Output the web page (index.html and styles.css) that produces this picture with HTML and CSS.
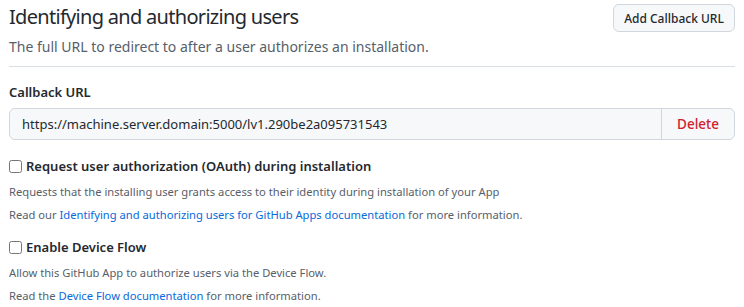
FILE: index.html
```html
<!DOCTYPE html>
<html>
  <head>
    <title>Identifying and authorizing users</title>
    <meta http-equiv="content-type" content="text/html;charset=utf-8">
    <link rel="stylesheet" href="styles.css">
  </head>
  <body>
    <div class="section">
      <div class="subhead">
        <div class="subhead-text">
          <h2>Identifying and authorizing users</h2>
          <p class="subhead-desc">The full URL to redirect to after a user authorizes an installation.</p>
        </div>
        <button class="btn">Add Callback URL</button>
      </div>

      <div class="form-group">
        <label class="label">Callback URL</label>
        <div class="input-group">
          <input class="input" type="text" value="https://machine.server.domain:5000/lv1.290be2a095731543">
          <button class="btn-delete">Delete</button>
        </div>
      </div>

      <div class="check">
        <label class="check-label"><input type="checkbox"> Request user authorization (OAuth) during installation</label>
        <p class="note">Requests that the installing user grants access to their identity during installation of your App</p>
        <p class="note">Read our <a href="#">Identifying and authorizing users for GitHub Apps documentation</a> for more information.</p>
      </div>

      <div class="check check-device">
        <label class="check-label"><input type="checkbox"> Enable Device Flow</label>
        <p class="note">Allow this GitHub App to authorize users via the Device Flow.</p>
        <p class="note">Read the <a href="#">Device Flow documentation</a> for more information.</p>
      </div>
    </div>
  </body>
</html>
```

FILE: styles.css
```css
body {
  font: 14px/1.5 "Noto Sans", sans-serif;
  margin: 0;
  color: #24292f;
  background: #fff;
}

.section {
  padding: 2px 9px 0 9px;
}

.subhead {
  display: flex;
  justify-content: space-between;
  align-items: flex-start;
  border-bottom: 1px solid #d8dee4;
  padding-bottom: 9px;
}

h2 {
  margin: 0;
  font-size: 20px;
  font-weight: 400;
  line-height: 30px;
  letter-spacing: -0.7px;
}

.subhead-desc {
  margin: 4px 0 0;
  line-height: 21px;
  color: #57606a;
}

.btn {
  font: 500 12px "Noto Sans", sans-serif;
  color: #24292f;
  background: #f6f8fa;
  border: 1px solid #d0d7de;
  border-radius: 6px;
  padding: 0 8px;
  width: 122px;
  height: 28px;
  margin-top: 2px;
  white-space: nowrap;
}

.form-group {
  margin-top: 15px;
}

.label {
  display: block;
  font-size: 13px;
  font-weight: 600;
  line-height: 20px;
  margin-bottom: 6px;
}

.input-group {
  display: flex;
  border: 1px solid #d0d7de;
  border-radius: 6px;
  background: #f6f8fa;
  height: 30px;
}

.input {
  flex: 1;
  border: 0;
  background: transparent;
  font: 13px "Noto Sans", sans-serif;
  color: #24292f;
  padding: 0 12px;
  outline: none;
}

.btn-delete {
  width: 73px;
  border: 0;
  border-left: 1px solid #d0d7de;
  background: transparent;
  color: #cf222e;
  font: 500 13.5px "Noto Sans", sans-serif;
}

.check {
  margin-top: 16px;
}

.check-device {
  margin-top: 13px;
}

.check-label {
  display: flex;
  align-items: center;
  gap: 4px;
  font-weight: 600;
  font-size: 13px;
  line-height: 20px;
}

.check-label input {
  margin: 0;
  width: 13px;
  height: 13px;
}

.note {
  margin: 4px 0 0;
  font-size: 11.2px;
  line-height: 19px;
  color: #57606a;
}

.check-label + .note {
  margin-top: 6px;
}

a {
  color: #0969da;
  text-decoration: none;
}
```
